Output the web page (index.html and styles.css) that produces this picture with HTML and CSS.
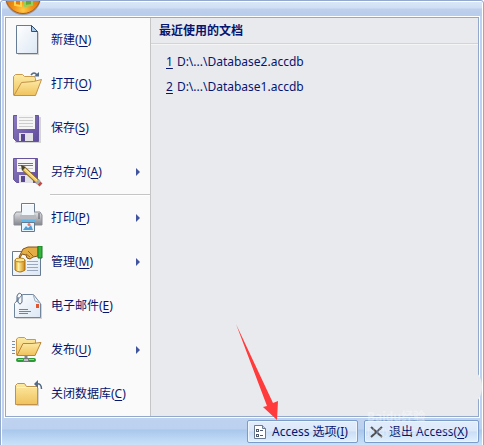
FILE: index.html
```html
<!DOCTYPE html>
<html lang="zh-CN">
<head>
<meta charset="utf-8">
<title>Access</title>
<link rel="stylesheet" href="styles.css">
</head>
<body>
<svg width="0" height="0" class="defs" aria-hidden="true">
  <defs>
    <linearGradient id="paper" x1="0" y1="0" x2="1" y2="1"><stop offset="0" stop-color="#fff"/><stop offset="1" stop-color="#dce7f4"/></linearGradient>
    <linearGradient id="folder" x1="0" y1="0" x2="0" y2="1"><stop offset="0" stop-color="#fdeba6"/><stop offset="1" stop-color="#f0c25c"/></linearGradient>
    <linearGradient id="purple" x1="0" y1="0" x2="1" y2="1"><stop offset="0" stop-color="#8c7cc0"/><stop offset="1" stop-color="#5f4a9c"/></linearGradient>
    <linearGradient id="metal" x1="0" y1="0" x2="0" y2="1"><stop offset="0" stop-color="#e2e3e6"/><stop offset="1" stop-color="#83868d"/></linearGradient>
    <linearGradient id="gold" x1="0" y1="0" x2="1" y2="0"><stop offset="0" stop-color="#dc9b18"/><stop offset=".35" stop-color="#fff0a0"/><stop offset="1" stop-color="#cf8410"/></linearGradient>
    <radialGradient id="orb" cx=".5" cy=".9" r=".75"><stop offset="0" stop-color="#ffca48"/><stop offset=".35" stop-color="#f49316"/><stop offset="1" stop-color="#c25d08"/></radialGradient>
  </defs>
</svg>
<div class="window">
  <svg class="orb" viewBox="0 0 40 16" aria-hidden="true">
    <circle cx="20" cy="-3" r="18" fill="#7a6a62" opacity=".5"/>
    <circle cx="20" cy="-4" r="17.5" fill="url(#orb)" stroke="#a95a20"/>
    <path d="M12 0V5l6 1V0" fill="#e87b10" stroke="#ffd54a" stroke-width="2"/>
    <path d="M22 0v6l7-1V0" fill="#69a832" stroke="#9bd058" stroke-width="2"/>
  </svg>
  <header class="band"></header>
  <main class="panel">
    <nav class="menu">
      <button class="item"><svg class="icon" viewBox="0 0 32 32"><path d="M7 3h16l5 6v22H7z" fill="#bbb" opacity=".6"/><path d="M5.500 1.500h15l6 6v22h-21z" fill="url(#paper)" stroke="#667b94"/><path d="M20.500 1.500v6h6z" fill="#a9c9e8" stroke="#33516f"/></svg><span>新建(<u>N</u>)</span></button>
      <button class="item"><svg class="icon" viewBox="0 0 32 32"><path d="M2.500 27V8.500l2-2h7l2 2h10l1 2V27z" fill="url(#folder)" stroke="#c99a4c"/><path d="M3 27.500 10.500 14.500l12-1 8-2-6 16z" fill="url(#folder)" stroke="#c2924a"/><path d="M20 7q3-4 6 0" fill="none" stroke="#536b88" stroke-width="1.500"/><path d="M23 8.500h5V4z" fill="#536b88"/></svg><span>打开(<u>O</u>)</span></button>
      <button class="item"><svg class="icon" viewBox="0 0 32 32"><path d="M4 5h26v26H4z" fill="#bbb" opacity=".6"/><path d="M2.500 3.500h25v26h-22l-3-3z" fill="url(#purple)" stroke="#66539e"/><path d="M6 3h18v14H6z" fill="#f5f5f5"/><path d="M8 5.500h14M8 8.500h14M8 11.500h14M8 14.500h14" stroke="#ccc"/><path d="M8 21h14v8H8z" fill="#e1e1e6"/><path d="M10 22h4v7h-4z" fill="#594690"/></svg><span>保存(<u>S</u>)</span></button>
      <button class="item"><svg class="icon" viewBox="0 0 32 32"><path d="M2.500 2.500h24v24h-21l-3-3z" fill="url(#purple)" stroke="#66539e"/><path d="M6 3h18v13H6z" fill="#f5f5f5"/><path d="M7 7.500h15M7 9.500h15" stroke="#27ae35"/><path d="M8 12.500h14" stroke="#ccc"/><path d="M8 19h14v8H8z" fill="#e1e1e6"/><path d="M10 20h4v6h-4z" fill="#594690"/><path d="m13 13 14 13" stroke="#8a6a24" stroke-width="5"/><path d="m13 13 14 13" stroke="#f5cd68" stroke-width="3"/><path d="m13 12 13 12" stroke="#fff0a8"/><path d="m10 9 1 6 4-4z" fill="#4b422c"/><path d="m26 25 2 2" stroke="#a9aea2" stroke-width="5"/><path d="m28 27 2 2" stroke="#b9504c" stroke-width="4"/></svg><span>另存为(<u>A</u>)</span><i class="more"></i></button>
      <hr class="rule">
      <button class="item"><svg class="icon" viewBox="0 0 32 32"><path d="M10.500 1.500h13v11h-13z" fill="#fff" stroke="#6c7b8e"/><path d="M5 10h24l2 3v10H3V13z" fill="url(#metal)" stroke="#8a8d94"/><path d="M11 3h12v10H11z" fill="#f2f7fc"/><path d="M9 13h16v4H9z" fill="#b7b9be"/><path d="M10 18h14v2H10z" fill="#5db8ec"/><path d="M27 12h2M27 14h2M27 16h2" stroke="#535861"/><path d="M10.500 20.500h13v9h-13z" fill="#e6f4ff" stroke="#65788d"/><path d="m12 28 3-4 2 2 3-3 2 5z" fill="#519dd4"/><circle cx="18" cy="22.500" r="1.500" fill="#ed7665"/></svg><span>打印(<u>P</u>)</span><i class="more"></i></button>
      <button class="item"><svg class="icon" viewBox="0 0 32 32"><path d="M1.500 5.500h28v24h-28z" fill="url(#paper)" stroke="#667b94"/><path d="M16 15.500h11M16 18.500h11M16 21.500h11M16 24.500h11" stroke="#9aa7bd"/><path d="M4 14v10q5 4 10 0V14z" fill="url(#gold)" stroke="#ae700d"/><ellipse cx="9" cy="14" rx="5" ry="2" fill="#ffe594" stroke="#b98218"/><path d="m8 11 4-8 5-2h10v9l-5 1-3 2-3-1-1-3-4-1-2 4z" fill="#e4ad46" stroke="#845416"/><path d="m15 8 4 3M17 5l5 5" stroke="#9d6821"/><path d="M27 0h4v12h-4z" fill="#35b33a" stroke="#187a24"/></svg><span>管理(<u>M</u>)</span><i class="more"></i></button>
      <button class="item"><svg class="icon" viewBox="0 0 32 32"><path d="M5 14h26v15H5z" fill="#bbb" opacity=".6"/><path d="m3.500 13.500 8-9h11l7 9v14h-26z" fill="url(#paper)" stroke="#71859c"/><path d="m22 4 2 7 5 2" fill="none" stroke="#9aacbe"/><path d="M25 14h3v4h-3z" fill="#e3552d"/><path d="M8 19.500h9M8 21.500h12M8 23.500h9" stroke="#71859c"/><path d="M6 12V6q2-5 5-1v7q-2 4-4 0V7" fill="none" stroke="#536b88"/></svg><span>电子邮件(<u>E</u>)</span></button>
      <button class="item"><svg class="icon" viewBox="0 0 32 32"><path d="M1 7.500h3M1 10.500h3M1 13.500h3M1 16.500h3M1 19.500h3" stroke="#7590b0"/><path d="M5.500 21V5l2-1.500h6l2 2h9V21z" fill="url(#folder)" stroke="#c99a4c"/><path d="m6 21.500 6-12h9l9-1-6 13z" fill="url(#folder)" stroke="#b98536"/><path d="M15 22v4" stroke="#7d858e" stroke-width="3"/><path d="M7 26h16" stroke="#2b9b35" stroke-width="4" stroke-linecap="round"/><path d="M7 25.500h16" stroke="#82df7b"/><path d="M12.500 24.500h5v3h-5z" fill="#bbc0c7" stroke="#777"/></svg><span>发布(<u>U</u>)</span><i class="more"></i></button>
      <button class="item"><svg class="icon" viewBox="0 0 32 32"><path d="M6 10h22v18H6z" fill="#bbb" opacity=".6"/><path d="M4.500 26.500v-19l2-2h7l2 3h11v18z" fill="url(#folder)" stroke="#c2924a"/><path d="M6 9.500h20" stroke="#fff2bd"/><path d="M30.500 11q0-6-5-5" fill="none" stroke="#536b88" stroke-width="1.500"/><path d="M23 6 27 2v8z" fill="#536b88"/></svg><span>关闭数据库(<u>C</u>)</span></button>
    </nav>
    <section class="recent">
      <h1>最近使用的文档</h1>
      <a href="#"><u>1</u> D:\...\Database2.accdb</a>
      <a href="#"><u>2</u> D:\...\Database1.accdb</a>
    </section>
  </main>
  <footer class="footer">
    <button class="action options"><svg viewBox="0 0 16 16"><path d="M2.500 1.500h8l3 3v10h-11z" fill="#fff" stroke="#697990"/><path d="M10.500 1.500v3h3" fill="#c5d7ea" stroke="#697990"/><path d="M4 5h3v3H4zM4 10h3v3H4z" fill="#4d5971"/><path d="M5 6h1v1H5zM5 11h1v1H5z" fill="#fff"/><path d="M8 6.500h3M8 11.500h3" stroke="#4d5971"/></svg><span>Access 选项(<u>I</u>)</span></button>
    <button class="action exit"><svg viewBox="0 0 16 16"><path d="m2 3 11 10M13 3 2 13" stroke="#4e4e50" stroke-width="2"/></svg><span>退出 Access(<u>X</u>)</span></button>
  </footer>
  <div class="glow"></div>
  <div class="mark"><b>Baidu经验</b><span>jingyan.baidu.com</span></div>
  <svg class="pointer" viewBox="0 0 44 98" aria-hidden="true"><path d="M1 1 38 80l5-2-1 19-14-13 4-1z" fill="#ff3b3b"/></svg>
</div>
</body>
</html>
```

FILE: styles.css
```css
* { box-sizing: border-box; }

body {
  margin: 0;
  font: 12px/16px "Noto Sans", "Noto Sans CJK SC", sans-serif;
  color: #06156e;
}

.defs { position: absolute; }

button {
  margin: 0;
  font: inherit;
  color: inherit;
  text-align: left;
  white-space: nowrap;
}

a { color: inherit; text-decoration: none; }
u { text-underline-offset: 2px; }

.window {
  position: relative;
  display: flex;
  flex-direction: column;
  min-height: 100vh;
  overflow: hidden;
  border: 1px solid #93a9cd;
  border-radius: 3px 3px 0 0;
  box-shadow: inset 0 0 0 1px #fff;
  background: #bed2ef;
  background-clip: padding-box;
}

.band {
  height: 14px;
  margin: 1px 1px 0;
  background: linear-gradient(#d9e6f7 0, #cfdff4 6px, #bdd0ec 7px, #b8cdec 100%);
}

.panel {
  display: grid;
  grid-template-columns: 145px 1fr;
  flex: 1;
  margin: 1px 4px 0;
  border: 1px solid #92a9cb;
  outline: 1px solid #fff;
  background: #e9eaee;
}

.menu {
  border-right: 1px solid #c5c5c5;
  background: #fafafa;
}

.item {
  display: flex;
  align-items: center;
  gap: 8px;
  width: 100%;
  height: 44px;
  padding: 0 10px 0 5px;
  border: 0;
  background: none;
}

.icon { flex: none; width: 32px; height: 32px; }

.more {
  margin-left: auto;
  border: solid transparent;
  border-width: 4px 0 4px 4px;
  border-left-color: #4054a0;
}

.rule {
  height: 2px;
  margin: 0 0 0 44px;
  border: 0;
  border-top: 1px solid #c5c5c5;
  background: #fff;
}

.recent {
  display: flex;
  flex-direction: column;
}

.recent h1 {
  height: 27px;
  margin: 0 0 6px;
  padding: 5px 8px;
  border-bottom: 1px solid #f5f5f5;
  box-shadow: inset 0 -1px #d3d4d5;
  font-size: 12px;
  line-height: 16px;
}

.recent a {
  display: flex;
  gap: 4px;
  padding: 3px 15px 6px;
}

.footer {
  display: flex;
  justify-content: flex-end;
  gap: 6px;
  margin: 1px 1px 0;
  padding: 2px 3px;
  background: linear-gradient(#bfd3ef 0, #bbd1ef 11px, #a9c7ec 12px, #c9e2fa 100%);
}

.action {
  display: flex;
  align-items: center;
  height: 23px;
  gap: 4px;
  padding: 0 4px;
  border: 1px solid #7b9bc9;
  border-radius: 2px;
  box-shadow: inset 0 0 0 1px #eef5fd;
  background: linear-gradient(#e2edfb 0, #dbe8f9 10px, #c9def6 11px, #e2f0fd 100%);
}

.action svg { width: 16px; height: 16px; }
.options { width: 111px; }
.exit { width: 115px; }

.glow {
  position: absolute;
  right: 1px;
  bottom: 42px;
  width: 20px;
  height: 32px;
  border-radius: 50%;
  background: #e9eaee;
}

.mark {
  position: absolute;
  right: 28px;
  bottom: 8px;
  display: flex;
  flex-direction: column;
  width: 88px;
  color: #fff;
  opacity: .35;
  font-size: 10px;
  line-height: 14px;
  pointer-events: none;
}

.mark b { font-size: 12px; line-height: 12px; }

.pointer {
  position: absolute;
  left: 234px;
  top: 322px;
  width: 44px;
  height: 98px;
}

.orb {
  position: absolute;
  left: 2px;
  top: -1px;
  width: 40px;
  height: 16px;
}
```
